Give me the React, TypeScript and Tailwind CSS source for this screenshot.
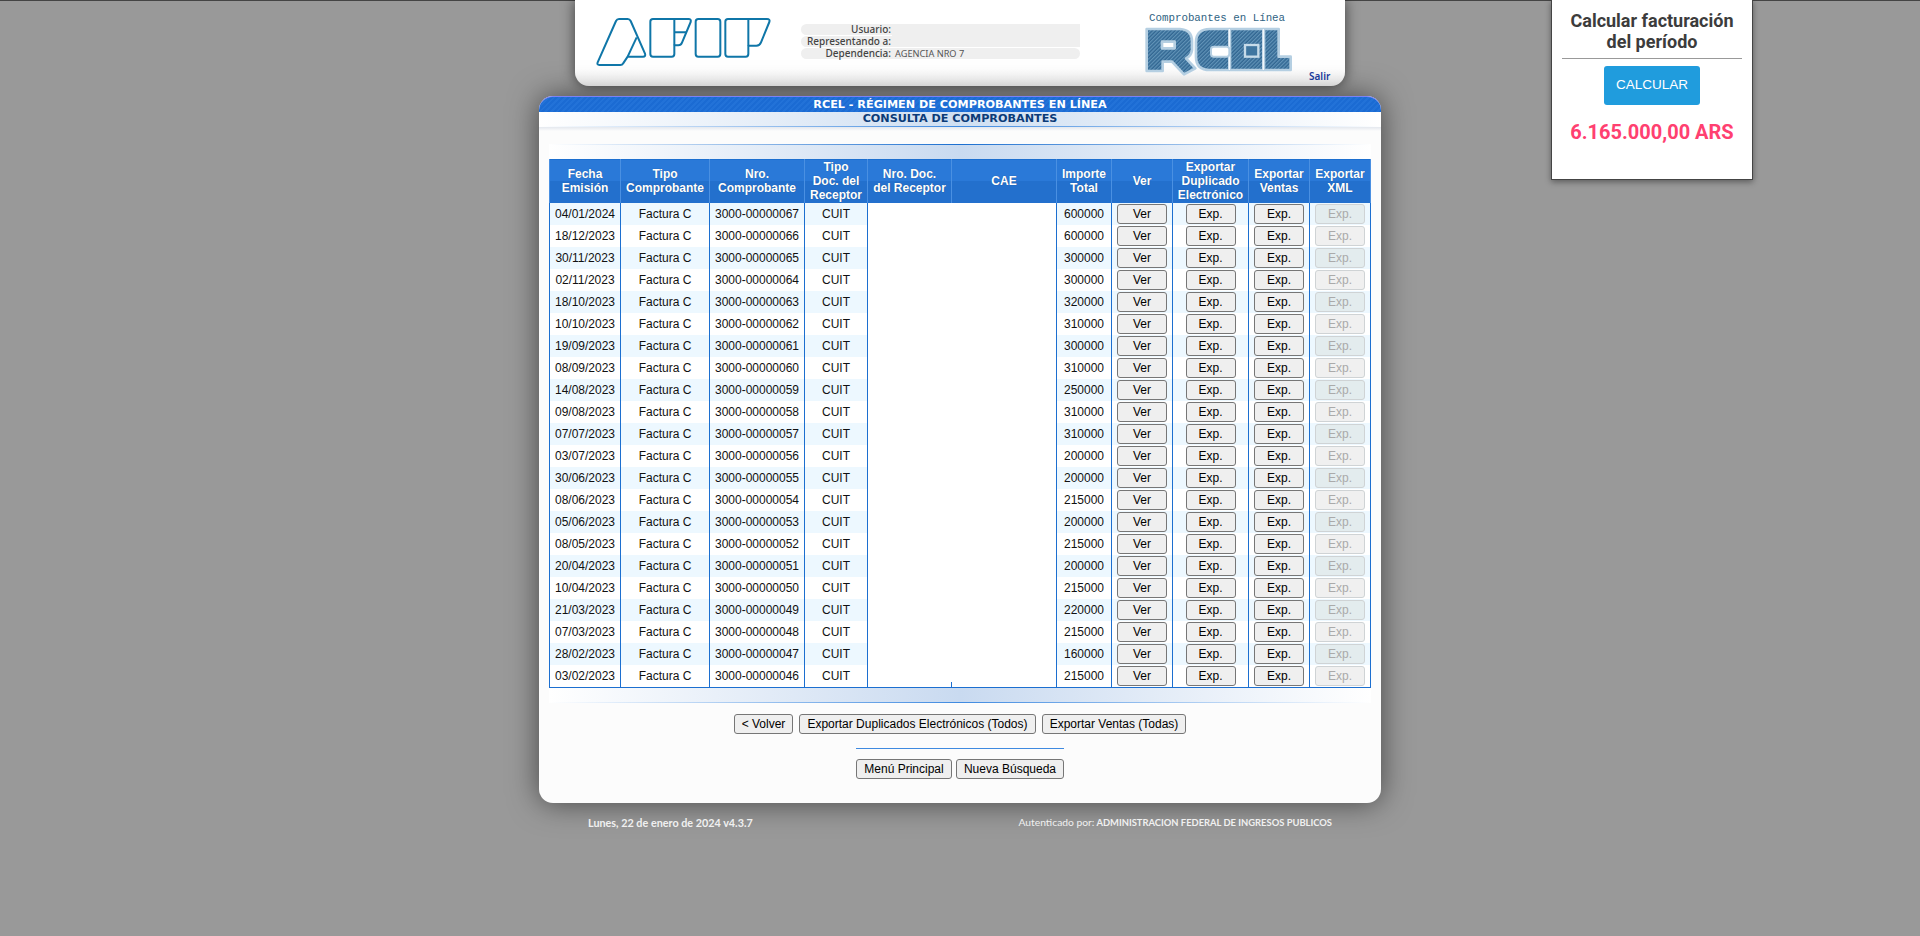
const rows = [
  ["04/01/2024", "67", "600000"],
  ["18/12/2023", "66", "600000"],
  ["30/11/2023", "65", "300000"],
  ["02/11/2023", "64", "300000"],
  ["18/10/2023", "63", "320000"],
  ["10/10/2023", "62", "310000"],
  ["19/09/2023", "61", "300000"],
  ["08/09/2023", "60", "310000"],
  ["14/08/2023", "59", "250000"],
  ["09/08/2023", "58", "310000"],
  ["07/07/2023", "57", "310000"],
  ["03/07/2023", "56", "200000"],
  ["30/06/2023", "55", "200000"],
  ["08/06/2023", "54", "215000"],
  ["05/06/2023", "53", "200000"],
  ["08/05/2023", "52", "215000"],
  ["20/04/2023", "51", "200000"],
  ["10/04/2023", "50", "215000"],
  ["21/03/2023", "49", "220000"],
  ["07/03/2023", "48", "215000"],
  ["28/02/2023", "47", "160000"],
  ["03/02/2023", "46", "215000"],
];

const headers = [
  { w: "w-[71px]", lines: ["Fecha", "Emisión"] },
  { w: "w-[89px]", lines: ["Tipo", "Comprobante"] },
  { w: "w-[95px]", lines: ["Nro.", "Comprobante"] },
  { w: "w-[63px]", lines: ["Tipo", "Doc. del", "Receptor"] },
  { w: "w-[84px]", lines: ["Nro. Doc.", "del Receptor"] },
  { w: "w-[105px]", lines: ["CAE"] },
  { w: "w-[55px]", lines: ["Importe", "Total"] },
  { w: "w-[61px]", lines: ["Ver"] },
  { w: "w-[76px]", lines: ["Exportar", "Duplicado", "Electrónico"] },
  { w: "w-[61px]", lines: ["Exportar", "Ventas"] },
  { w: "w-[61px]", lines: ["Exportar", "XML"] },
];

const cell = "border-x border-[#1c6fd0] p-0 text-center";

function Btn({ children, className = "" }: { children: React.ReactNode; className?: string }) {
  return (
    <button className={`h-5 rounded-[3px] border border-[#767676] bg-[#efefef] text-[12px] leading-none text-black ${className}`}>
      {children}
    </button>
  );
}

function AfipLogo() {
  return (
    <svg width="200" height="80" viewBox="0 0 600 240" fill="none" stroke="#0f76a8" strokeWidth="6" strokeLinejoin="round">
      <path d="M38 172 L93 48 Q96 42 102 42 L128 42 Q134 42 137 48 L180 146 Q183 155 174 155 L128 155 L114 176 Q112 180 106 180 L43 180 Q35 180 38 172 Z" />
      <path d="M155 97 L128 155" />
      <path d="M204 42 L310 42 Q320 42 317 51 L291 113 Q288 121 280 121 L268 121 L268 147 Q268 155 260 155 L204 155 Q196 155 196 147 L196 50 Q196 42 204 42 Z" />
      <path d="M268 42 L268 121 M268 82 L304 82" />
      <rect x="332" y="42" width="74" height="113" rx="8" />
      <path d="M429 42 L546 42 Q556 42 553 51 L528 112 Q524 122 514 122 L490 122 L490 147 Q490 155 482 155 L429 155 Q421 155 421 147 L421 50 Q421 42 429 42 Z" />
      <path d="M490 42 L490 122" />
    </svg>
  );
}

function RcelLogo() {
  return (
    <svg width="150" height="50" viewBox="42 63 450 150">
      <defs>
        <pattern id="denim" width="8" height="8" patternUnits="userSpaceOnUse" patternTransform="rotate(45)">
          <rect width="8" height="8" fill="#447ca6" />
          <rect width="2" height="8" fill="#6c9bbd" />
          <rect x="5" width="2" height="8" fill="#2a5b84" />
        </pattern>
      </defs>
      <g fill="url(#denim)" stroke="#b5cfe2" strokeWidth="8" strokeLinejoin="round">
        <path fillRule="evenodd" d="M50 72 L150 72 Q186 74 186 110 L186 135 Q184 152 168 160 L196 190 L162 208 L126 170 L98 170 L98 198 L50 198 Z M96 110 L134 110 L134 130 L96 130 Z" />
        <path d="M240 72 L298 72 L298 195 L240 195 Q198 195 198 155 L198 112 Q198 72 240 72 Z" />
        <path d="M300 72 L400 72 L400 195 L300 195 Z" />
        <path d="M402 72 L446 72 L446 155 L482 155 L482 195 L402 195 Z" />
      </g>
      <path d="M298 72 L298 195 M400 72 L400 195" stroke="#f2f7fb" strokeWidth="4" />
      <rect x="243" y="125" width="55" height="30" rx="8" fill="#fff" stroke="#b5cfe2" strokeWidth="6" />
      <rect x="345" y="120" width="40" height="35" fill="#3f76a0" stroke="#c6dbe9" strokeWidth="7" />
    </svg>
  );
}

function HeaderCard() {
  return (
    <div className="mx-auto flex h-[86px] w-[770px] items-start rounded-b-[14px] bg-[linear-gradient(180deg,#fff_80%,#f6f6f6)] shadow-[0_0_14px_rgba(0,0,0,0.6)]">
      <div className="mt-[5px] ml-[10px]">
        <AfipLogo />
      </div>
      <div className="mt-[24px] ml-[16px] flex w-[279px] flex-col gap-px font-['Noto_Sans',sans-serif] text-[10px] leading-[11px] text-[#444]">
        <div className="flex">
          <div className="flex flex-col gap-px">
            <div className="h-[11px] w-[91px] rounded-l-[6px] bg-[#efefef] pr-px text-right font-medium">Usuario:</div>
            <div className="h-[11px] w-[91px] rounded-l-[6px] bg-[#efefef] pr-px text-right font-medium">Representando a:</div>
          </div>
          <div className="h-[23px] flex-1 bg-[#efefef]" />
        </div>
        <div className="flex h-[11px] rounded-[6px] bg-[#efefef]">
          <div className="w-[91px] pr-px text-right font-medium">Dependencia:</div>
          <div className="pl-[3px] text-[9.2px] text-[#555]">AGENCIA NRO 7</div>
        </div>
      </div>
      <div className="mt-[11px] ml-[64px] flex flex-col">
        <div className="h-[15px] pl-[5px] font-['Liberation_Mono',monospace] text-[10.8px] leading-[15px] text-[#2f6383]">
          Comprobantes en Línea
        </div>
        <RcelLogo />
      </div>
      <a className="mt-[70px] ml-[15px] font-['Noto_Sans',sans-serif] text-[10px] leading-[12px] font-semibold text-[#1a3a9a]">Salir</a>
    </div>
  );
}

function CalcCard() {
  return (
    <div className="absolute top-0 left-[1551px] flex h-[180px] w-[202px] flex-col items-center border-x border-b border-[#444] bg-white px-[10px] shadow-[0_2px_6px_rgba(0,0,0,0.4)] font-['Roboto',sans-serif]">
      <div className="mt-[10px] text-center text-[18px] leading-[21px] font-bold text-[#3c3c3c]">
        Calcular facturación
        <br />
        del período
      </div>
      <div className="mt-[6px] h-px w-full bg-[#999]" />
      <button className="mt-[7px] h-[39px] w-[96px] rounded-[3px] bg-[#209cdd] text-[13.5px] text-white font-['Liberation_Sans',sans-serif]">
        CALCULAR
      </button>
      <div className="mt-[15px] text-[20px] leading-[24px] font-bold whitespace-nowrap text-[#ff4070]">6.165.000,00 ARS</div>
    </div>
  );
}

function Table() {
  return (
    <table className="w-[821px] table-fixed border-collapse border border-[#1c6fd0] text-[12px] leading-[14px] text-[#111]">
      <colgroup>
        {headers.map((h, i) => (
          <col key={i} className={h.w} />
        ))}
      </colgroup>
      <thead>
        <tr className="h-[43px] bg-[linear-gradient(180deg,#2a79d8_50%,#2370cd_50%)]">
          {headers.map((h, i) => (
            <th key={i} className="border-x border-[#4a90e2] p-0 text-center font-bold text-white [text-shadow:0_0_1px_rgba(0,0,0,0.35)]">
              {h.lines.map((l) => (
                <div key={l}>{l}</div>
              ))}
            </th>
          ))}
        </tr>
      </thead>
      <tbody>
        {rows.map((r, i) => {
          const odd = i % 2 === 0;
          const last = i === rows.length - 1;
          return (
            <tr key={r[1]} className={`${last ? "h-[23px]" : "h-[22px]"} ${odd ? "bg-[#edf8ff]" : "bg-white"}`}>
              <td className={cell}>{r[0]}</td>
              <td className={cell}>Factura C</td>
              <td className={cell}>3000-000000{r[1]}</td>
              <td className={cell}>CUIT</td>
              <td className="relative border-l border-[#1c6fd0] bg-white p-0">
                {last && <div className="absolute right-0 bottom-0 h-[5px] w-px bg-[#1c6fd0]" />}
              </td>
              <td className="border-r border-[#1c6fd0] bg-white p-0" />
              <td className={cell}>{r[2]}</td>
              <td className={cell}>
                <Btn className="w-[50px]">Ver</Btn>
              </td>
              <td className={cell}>
                <Btn className="w-[50px]">Exp.</Btn>
              </td>
              <td className={cell}>
                <Btn className="w-[50px]">Exp.</Btn>
              </td>
              <td className={cell}>
                <button className={`h-5 w-[50px] rounded-[3px] border border-[#cfd3d5] text-[12px] leading-none text-[#aaa] ${odd ? "bg-[#e3ecee]" : "bg-[#f0f0f0]"}`}>
                  Exp.
                </button>
              </td>
            </tr>
          );
        })}
      </tbody>
    </table>
  );
}

function MainPanel() {
  return (
    <div className="mx-auto mt-[10px] flex w-[842px] flex-col rounded-[14px] bg-[#fcfcfc] pb-[24px] shadow-[0_0_30px_rgba(0,0,0,0.55)]">
      <div className="h-[16px] rounded-t-[14px] border-t border-[#7b82f5] bg-[repeating-linear-gradient(135deg,#1b6bd3_0px,#1b6bd3_2px,#2272d8_2px,#2272d8_4px)] text-center font-['DejaVu_Sans',sans-serif] text-[11.2px] leading-[15px] font-bold text-white">
        RCEL - RÉGIMEN DE COMPROBANTES EN LÍNEA
      </div>
      <div className="h-[14px] bg-[linear-gradient(90deg,#fff,#cfdff2_50%,#fff)] text-center font-['DejaVu_Sans',sans-serif] text-[11.2px] leading-[14px] font-bold text-[#0b3b78]">
        CONSULTA DE COMPROBANTES
      </div>
      <div className="h-px bg-[linear-gradient(90deg,#fff,#3f8ae0_50%,#fff)]" />
      <div className="h-[4px] bg-[linear-gradient(180deg,#e4e8ee,#fcfcfc)]" />
      <div className="mx-[10px] mt-[13px] h-px bg-[linear-gradient(90deg,#fff,#1c6fd0_50%,#fff)]" />
      <div className="mx-[10px] h-[14px] bg-[linear-gradient(90deg,#fff,#c9daf0_50%,#fff)]" />
      <div className="mx-[10px]">
        <Table />
      </div>
      <div className="mx-[10px] h-[14px] bg-[linear-gradient(90deg,#fff,#c9daf0_50%,#fff)]" />
      <div className="mx-[10px] h-px bg-[linear-gradient(90deg,#fff,#3f8ae0_50%,#fff)]" />
      <div className="mt-[11px] flex justify-center gap-[6px]">
        <Btn className="w-[59px]">&lt; Volver</Btn>
        <Btn className="w-[237px]">Exportar Duplicados Electrónicos (Todos)</Btn>
        <Btn className="w-[144px]">Exportar Ventas (Todas)</Btn>
      </div>
      <div className="mx-auto mt-[14px] h-px w-[208px] bg-[#3f8ae0]" />
      <div className="mt-[10px] flex justify-center gap-[4px]">
        <Btn className="w-[96px]">Menú Principal</Btn>
        <Btn className="w-[108px]">Nueva Búsqueda</Btn>
      </div>
    </div>
  );
}

export default function App() {
  return (
    <div className="relative min-h-screen overflow-hidden bg-[#999] font-['Liberation_Sans',sans-serif] shadow-[inset_0_1px_0_#444]">
      <CalcCard />
      <HeaderCard />
      <MainPanel />
      <div className="mx-auto mt-[12px] flex w-[842px] items-center justify-between pr-[49px] pl-[49px] font-['Lato',sans-serif] text-[10.8px] leading-[14px] font-bold text-[#f0f0f0]">
        <span>Lunes, 22 de enero de 2024 v4.3.7</span>
        <span className="text-[9.4px]">
          <span className="text-[10.3px] font-normal">Autenticado por:</span> ADMINISTRACION FEDERAL DE INGRESOS PUBLICOS
        </span>
      </div>
    </div>
  );
}
